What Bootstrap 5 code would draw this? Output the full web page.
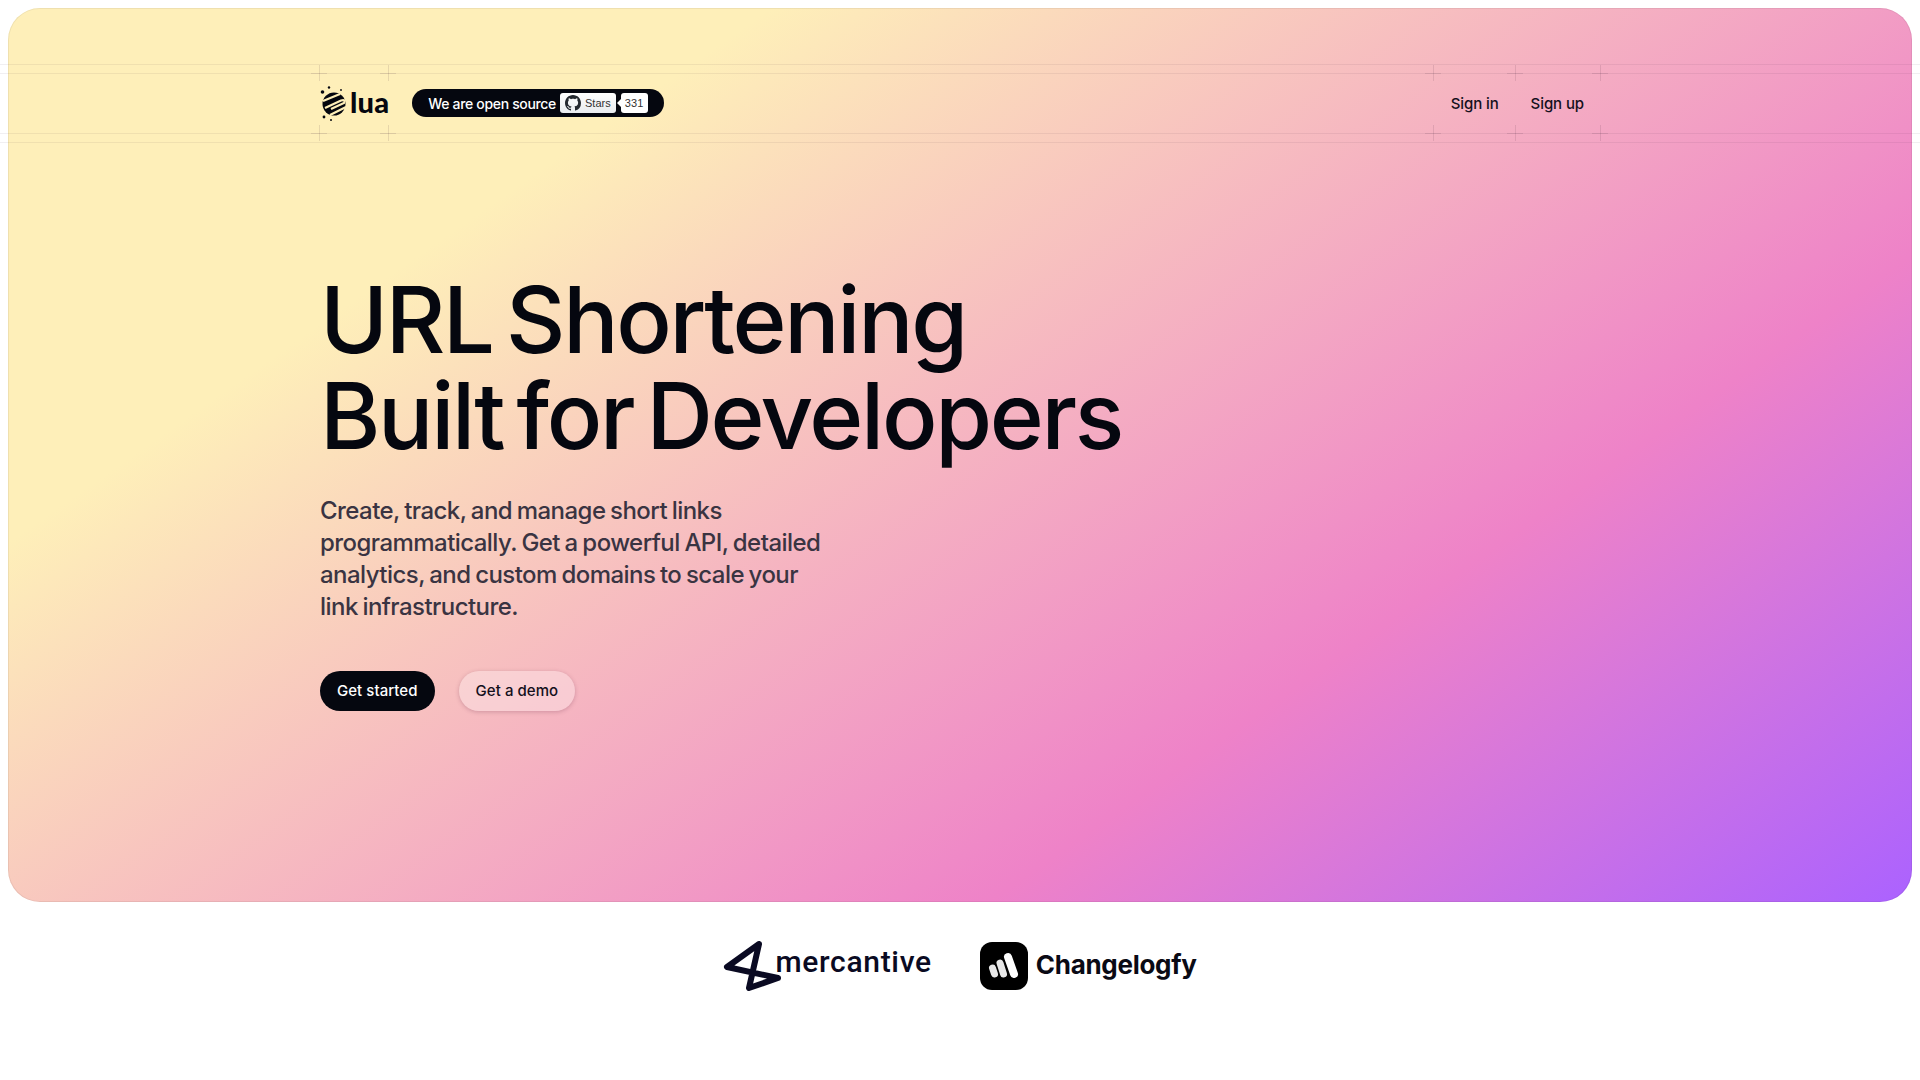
<!DOCTYPE html>
<html lang="en">
<head>
    <meta charset="UTF-8">
    <meta name="viewport" content="width=device-width, initial-scale=1.0">
    <title>Lua - URL Shortening</title>
    <link href="https://cdn.jsdelivr.net/npm/bootstrap@5.3.0/dist/css/bootstrap.min.css" rel="stylesheet">
    <style>
        body { font-family: Inter, "Liberation Sans", sans-serif; color: #05070f; background: #fff; height: 1080px; overflow: hidden; }
        .hero-box { height: 894px; padding-top: 64px; border-radius: 32px; background: linear-gradient(145deg, #feefb9 24%, #ee82c8 71%, #ab62ff 100%); box-shadow: inset 0 0 0 1px rgba(0,0,0,.06); }
        .top-nav { width: 1280px; height: 62px; padding-right: 16px; }
        .hero-inner { width: 1280px; }
        .lua-word { font-family: Lato, sans-serif; font-size: 29px; font-weight: 900; line-height: 1; letter-spacing: .2px; padding-bottom: 4px; }
        .oss-pill { height: 28px; margin-left: 23px; padding: 0 16px; background: #05070f; color: #fff; font-size: 14px; font-weight: 500; letter-spacing: -.33px; }
        .gh-btn { height: 20px; padding: 0 5px; margin-left: 4px; border-radius: 3px; background: linear-gradient(#fff, #e9ecef); color: #333; font: 500 11px "Liberation Sans", sans-serif; letter-spacing: 0; }
        .gh-count { height: 20px; padding: 0 4px; margin-left: 5px; border-radius: 3px; background: #fff; color: #333; font: 500 11px "Liberation Sans", sans-serif; letter-spacing: .2px; position: relative; }
        .gh-count::before { content: ""; position: absolute; left: -4px; top: 6px; border-style: solid; border-width: 4px 4px 4px 0; border-color: transparent #fff transparent transparent; }
        .nav-link-top { color: #14101c; font-size: 15px; font-weight: 500; letter-spacing: -.1px; text-decoration: none; padding-top: 2px; }
        .hero-title { margin: 138px 0 0; font-size: 92px; line-height: 96px; font-weight: 500; letter-spacing: -2.3px; word-spacing: -9px; color: #05070f; }
        .hero-text { margin: 31px 0 0; width: 512px; font-size: 24px; line-height: 32px; font-weight: 450; letter-spacing: -.55px; word-spacing: -1.2px; color: #3a3442; }
        .btn-start, .btn-demo { height: 40px; padding: 0 17px; font-size: 15px; font-weight: 500; letter-spacing: .05px; border: 0; }
        .btn-start { background: #05070f; color: #fff; }
        .btn-demo { background: rgba(255,255,255,.3); color: #14101c; box-shadow: 0 1px 4px rgba(90,30,60,.25); }
        .guide-h { position: absolute; left: -8px; right: -8px; height: 1px; background: rgba(60,30,50,.07); }
        .guide-x { position: absolute; width: 16px; height: 16px; background: linear-gradient(rgba(60,30,50,.12), rgba(60,30,50,.12)) center / 1px 100% no-repeat, linear-gradient(rgba(60,30,50,.12), rgba(60,30,50,.12)) center / 100% 1px no-repeat; }
        .logo-row { height: 48px; margin-top: 40px; gap: 48px; }
        .merc-word { font-family: Roboto, sans-serif; font-size: 30px; font-weight: 500; line-height: 1; color: #0a0a22; margin-left: -20px; margin-top: -8px; letter-spacing: .7px; }
        .chg-word { font-family: Inter, sans-serif; font-size: 26px; font-weight: 700; color: #0a0a14; margin-left: 8px; margin-top: -3px; letter-spacing: -.3px; }
    </style>
</head>
<body>
    <div class="p-2 pb-0">
        <section class="hero-box position-relative">
            <!-- decorative guides around the nav -->
            <div class="guide-h" style="top:56px"></div>
            <div class="guide-h" style="top:65px"></div>
            <div class="guide-h" style="top:125px"></div>
            <div class="guide-h" style="top:134px"></div>
            <div class="guide-x" style="left:303px;top:57px"></div>
            <div class="guide-x" style="left:372px;top:57px"></div>
            <div class="guide-x" style="left:1417px;top:57px"></div>
            <div class="guide-x" style="left:1499px;top:57px"></div>
            <div class="guide-x" style="left:1584px;top:57px"></div>
            <div class="guide-x" style="left:303px;top:117px"></div>
            <div class="guide-x" style="left:372px;top:117px"></div>
            <div class="guide-x" style="left:1417px;top:117px"></div>
            <div class="guide-x" style="left:1499px;top:117px"></div>
            <div class="guide-x" style="left:1584px;top:117px"></div>

            <nav class="top-nav mx-auto d-flex align-items-center justify-content-between position-relative">
                <div class="d-flex align-items-center">
                    <a href="#" class="d-flex align-items-center text-decoration-none text-reset">
                        <svg width="30" height="36" viewBox="0 0 30 36">
                            <circle cx="14" cy="19" r="11.5" fill="#05070f"/>
                            <path d="M3 16 L20 9 M5 23 L21 15.5 Q26 14 24 18 L11 24 M10 30 L26 22" stroke="#feefb9" stroke-width="2.2" fill="none"/>
                            <circle cx="2.5" cy="7" r="1.8" fill="#05070f"/>
                            <circle cx="9" cy="2.5" r="1.2" fill="#05070f"/>
                            <circle cx="21" cy="5" r=".9" fill="#05070f"/>
                            <circle cx="4" cy="32" r="1.4" fill="#05070f"/>
                            <circle cx="11" cy="35" r="1" fill="#05070f"/>
                        </svg>
                        <span class="lua-word">lua</span>
                    </a>
                    <a href="#" class="oss-pill rounded-pill d-flex align-items-center text-decoration-none">
                        We are open source
                        <span class="gh-btn d-inline-flex align-items-center gap-1">
                            <svg width="16" height="16" viewBox="0 0 16 16" fill="#24292f"><path d="M8 0C3.58 0 0 3.58 0 8c0 3.54 2.29 6.53 5.47 7.59.4.07.55-.17.55-.38 0-.19-.01-.82-.01-1.49-2.01.37-2.53-.49-2.69-.94-.09-.23-.48-.94-.82-1.13-.28-.15-.68-.52-.01-.53.63-.01 1.08.58 1.23.82.72 1.21 1.87.87 2.33.66.07-.52.28-.87.51-1.07-1.78-.2-3.64-.89-3.64-3.95 0-.87.31-1.59.82-2.15-.08-.2-.36-1.02.08-2.12 0 0 .67-.21 2.2.82.64-.18 1.32-.27 2-.27.68 0 1.36.09 2 .27 1.53-1.04 2.2-.82 2.2-.82.44 1.1.16 1.92.08 2.12.51.56.82 1.27.82 2.15 0 3.07-1.87 3.75-3.65 3.95.29.25.54.73.54 1.48 0 1.07-.01 1.93-.01 2.2 0 .21.15.46.55.38A8.013 8.013 0 0016 8c0-4.42-3.58-8-8-8z"/></svg>
                            Stars
                        </span>
                        <span class="gh-count d-inline-flex align-items-center">331</span>
                    </a>
                </div>
                <div class="d-flex align-items-center gap-2">
                    <a href="#" class="nav-link-top me-4">Sign in</a>
                    <a href="#" class="nav-link-top">Sign up</a>
                </div>
            </nav>

            <div class="hero-inner mx-auto position-relative">
                <h1 class="hero-title">URL Shortening<br>Built for Developers</h1>
                <p class="hero-text">Create, track, and manage short links programmatically. Get a powerful API, detailed analytics, and custom domains to scale your link infrastructure.</p>
                <div class="d-flex gap-4 mt-5">
                    <button class="btn btn-start rounded-pill">Get started</button>
                    <button class="btn btn-demo rounded-pill">Get a demo</button>
                </div>
            </div>
        </section>

        <div class="logo-row d-flex justify-content-center align-items-center">
            <div class="d-flex align-items-center">
                <svg width="72" height="50" viewBox="0 0 72 50">
                    <path d="M36 3 L4 26 L55 37 L26 47 Z" fill="none" stroke="#0a0a22" stroke-width="6" stroke-linejoin="round"/>
                </svg>
                <span class="merc-word">mercantive</span>
            </div>
            <div class="d-flex align-items-center">
                <svg width="48" height="48" viewBox="0 0 48 48">
                    <rect width="48" height="48" rx="12" fill="#000"/>
                    <path d="M12.5 26 L14.5 32 M20 21 L23.5 32" stroke="#e8e8e8" stroke-width="7" stroke-linecap="round"/>
                    <path d="M28 15 L34 32" stroke="#fff" stroke-width="8" stroke-linecap="round"/>
                </svg>
                <span class="chg-word">Changelogfy</span>
            </div>
        </div>
    </div>
    <script src="https://cdn.jsdelivr.net/npm/bootstrap@5.3.0/dist/js/bootstrap.bundle.min.js"></script>
</body>
</html>
